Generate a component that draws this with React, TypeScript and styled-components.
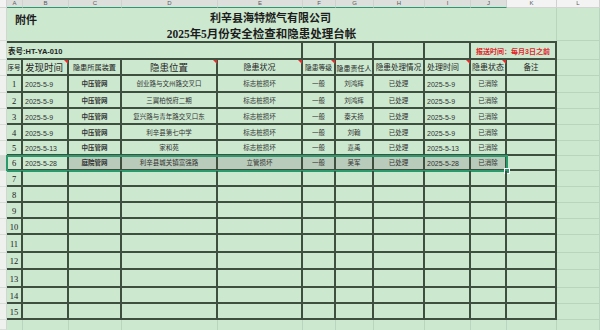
import React from 'react';
import styled, { createGlobalStyle, css } from 'styled-components';

const COLS = '7px 16px 46px 53px 96px 85px 33px 38px 51px 46px 36px 50px 1fr';
const LETTERS = ['A', 'B', 'C', 'D', 'E', 'F', 'G', 'H', 'I', 'J', 'K', 'L'];
const SELECTED_COLS = 10;
const LINE = '#3e4f40';
const GRID = '#bad5bd';
const SHEET = '#cce8cf';
const SEL = '#2a9a6c';
const SANS = `"Liberation Sans", "Noto Sans CJK SC", sans-serif`;
const SERIF = `"Liberation Serif", "Noto Sans CJK SC", serif`;

type Align = 'left' | 'center';

const columns: { label: string; size: number; align: Align; note: boolean }[] = [
  { label: '序号', size: 6.5, align: 'center', note: false },
  { label: '发现时间', size: 9.5, align: 'left', note: true },
  { label: '隐患所属装置', size: 7.2, align: 'center', note: false },
  { label: '隐患位置', size: 9.5, align: 'center', note: true },
  { label: '隐患状况', size: 8, align: 'center', note: true },
  { label: '隐患等级', size: 6.8, align: 'center', note: true },
  { label: '隐患责任人', size: 7, align: 'center', note: false },
  { label: '隐患处理情况', size: 7.6, align: 'center', note: false },
  { label: '处理时间', size: 8, align: 'left', note: true },
  { label: '隐患状态', size: 8, align: 'center', note: true },
  { label: '备注', size: 7.5, align: 'center', note: false },
];

const records = [
  ['2025-5-9', '中压管网', '创业路与文州路交叉口', '标志桩损坏', '一般', '刘鸿辉', '已处理', '2025-5-9', '已消除'],
  ['2025-5-9', '中压管网', '三翼柏悦府二期', '标志桩损坏', '一般', '刘鸿辉', '已处理', '2025-5-9', '已消除'],
  ['2025-5-9', '中压管网', '复兴路与青年路交叉口东', '标志桩损坏', '一般', '秦天扬', '已处理', '2025-5-9', '已消除'],
  ['2025-5-9', '中压管网', '利辛县第七中学', '标志桩损坏', '一般', '刘翰', '已处理', '2025-5-9', '已消除'],
  ['2025-5-13', '中压管网', '家和苑', '标志桩损坏', '一般', '嘉禹', '已处理', '2025-5-13', '已消除'],
  ['2025-5-28', '庭院管网', '利辛县城关镇富强路', '立管损坏', '一般', '吴军', '已处理', '2025-5-28', '已消除'],
];

const ROW_HEIGHTS = [17, 16, 16, 16, 15, 15, 16, 16, 16, 16, 18, 17, 18, 16, 16];
const SELECTED_ROW = 5;

const GlobalStyle = createGlobalStyle`
  html, body { margin: 0; padding: 0; background: ${SHEET}; }
`;

const Page = styled.div`
  width: 600px;
  height: 330px;
  overflow: hidden;
  background: ${SHEET};
  display: flex;
  flex-direction: column;
  font-family: ${SANS};
  color: #2b2b2b;
`;

const Row = styled.div<{ $h?: number }>`
  display: grid;
  grid-template-columns: ${COLS};
  position: relative;
  flex: ${(p) => (p.$h ? `0 0 ${p.$h}px` : '1 1 auto')};
  & > * {
    box-sizing: border-box;
    min-width: 0;
  }
`;

const Corner = styled.div`
  background: #f3f3f3;
  border-right: 1px solid #d4d4d4;
  border-bottom: 1px solid #d4d4d4;
`;

const ColLetter = styled.div<{ $sel: boolean }>`
  display: flex;
  align-items: center;
  justify-content: center;
  font: 6px/7px "Liberation Sans", sans-serif;
  color: #5a5a5a;
  overflow: hidden;
  background: ${(p) => (p.$sel ? '#dcdfdc' : '#f3f3f3')};
  border-right: 1px solid #cfd2cf;
  border-bottom: 1px solid ${(p) => (p.$sel ? SEL : '#d4d4d4')};
`;

const RowHead = styled.div<{ $sel?: boolean }>`
  background: ${(p) => (p.$sel ? '#d3dbd3' : '#eef1ee')};
  border-bottom: 1px solid #d8ddd8;
  border-right: 1px solid ${(p) => (p.$sel ? SEL : '#d0d6d0')};
`;

const Spare = styled.div<{ $noBottom?: boolean }>`
  border-right: 1px solid ${GRID};
  border-bottom: ${(p) => (p.$noBottom ? 'none' : `1px solid ${GRID}`)};
`;

const TitleCell = styled.div`
  grid-column: span 11;
  display: grid;
  grid-template-rows: 14px 14px;
  row-gap: 2px;
  padding: 3px 48px 0 8px;
  border-right: 1px solid ${GRID};
`;

const Attach = styled.span`
  grid-area: 1 / 1;
  justify-self: start;
  margin-top: 2px;
  font: bold 11px/14px ${SANS};
  color: #1c1c1c;
`;

const Company = styled.span`
  grid-area: 1 / 1;
  justify-self: center;
  margin-left: 18px;
  font: bold 11px/14px ${SERIF};
  color: #1c1c1c;
`;

const SheetTitle = styled.span`
  grid-area: 2 / 1;
  justify-self: center;
  font: bold 11.5px/14px ${SERIF};
  color: #1c1c1c;
`;

const boxed = css`
  border-top: 2px solid ${LINE};
  border-right: 2px solid ${LINE};
  border-bottom: 2px solid ${LINE};
  display: flex;
  align-items: center;
  padding-top: 2px;
`;

const CodeCell = styled.div`
  ${boxed};
  grid-column: span 5;
  padding-left: 1px;
  font: bold 7.5px/1 ${SANS};
  color: #1e1e1e;
`;

const BlankBox = styled.div`
  ${boxed};
`;

const Notice = styled.div`
  ${boxed};
  grid-column: span 2;
  justify-content: center;
  font: bold 7px/1 ${SANS};
  color: #e3262a;
  white-space: nowrap;
`;

const cell = css<{ $align: Align }>`
  display: flex;
  align-items: center;
  justify-content: ${(p) => (p.$align === 'left' ? 'flex-start' : 'center')};
  padding: 2px 0 0 ${(p) => (p.$align === 'left' ? '2px' : '0')};
  border-right: 2px solid ${LINE};
  border-bottom: 2px solid ${LINE};
  white-space: nowrap;
  overflow: hidden;
`;

const HeadCell = styled.div<{ $align: Align; $size: number; $note: boolean }>`
  ${cell};
  position: relative;
  overflow: visible;
  font-size: ${(p) => p.$size}px;
  line-height: 1;
  color: #1f1f1f;
  ${(p) =>
    p.$note &&
    css`
      &::after {
        content: '';
        position: absolute;
        top: 0;
        right: -1px;
        border-top: 4px solid #e03030;
        border-left: 4px solid transparent;
      }
    `}
`;

const DataCell = styled.div<{ $align: Align; $kind: 'num' | 'date' | 'text'; $bold?: boolean; $shade?: boolean }>`
  ${cell};
  background: ${(p) => (p.$shade ? '#b9cbba' : 'transparent')};
  color: #333;
  line-height: 1;
  font-weight: ${(p) => (p.$bold ? 700 : 400)};
  ${(p) =>
    p.$kind === 'num'
      ? css`
          font-family: ${SERIF};
          font-size: 8.5px;
          color: #222;
        `
      : p.$kind === 'date'
        ? css`
            font-family: ${SANS};
            font-size: 7px;
          `
        : css`
            font-family: ${SANS};
            font-size: 6.5px;
          `}
`;

const EmptyCell = styled.div`
  border-right: 1px solid ${GRID};
`;

const Selection = styled.div`
  position: absolute;
  left: 6px;
  width: 502px;
  top: -1px;
  bottom: -1px;
  box-sizing: border-box;
  border: 2px solid ${SEL};
  pointer-events: none;
  &::after {
    content: '';
    position: absolute;
    right: -4px;
    bottom: -4px;
    width: 4px;
    height: 4px;
    background: ${SEL};
    border: 1px solid #ffffff;
  }
`;

const App: React.FC = () => {
  return (
    <Page>
      <GlobalStyle />
      <Row $h={7}>
        <Corner />
        {LETTERS.map((l, i) => (
          <ColLetter key={l} $sel={i < SELECTED_COLS}>
            {l}
          </ColLetter>
        ))}
      </Row>

      <Row $h={32}>
        <RowHead />
        <TitleCell>
          <Attach>附件</Attach>
          <Company>利辛县海特燃气有限公司</Company>
          <SheetTitle>2025年5月份安全检查和隐患处理台帐</SheetTitle>
        </TitleCell>
        <Spare />
      </Row>

      <Row $h={19}>
        <RowHead />
        <CodeCell>表号:HT-YA-010</CodeCell>
        <BlankBox />
        <BlankBox />
        <BlankBox />
        <BlankBox />
        <Notice>报送时间：每月3日之前</Notice>
        <Spare />
      </Row>

      <Row $h={16}>
        <RowHead />
        {columns.map((c) => (
          <HeadCell key={c.label} $align={c.align} $size={c.size} $note={c.note}>
            {c.label}
          </HeadCell>
        ))}
        <Spare />
      </Row>

      {ROW_HEIGHTS.map((h, r) => {
        const rec = records[r];
        const sel = r === SELECTED_ROW;
        return (
          <Row key={r} $h={h}>
            <RowHead $sel={sel} />
            <DataCell $align="center" $kind="num">
              {r + 1}
            </DataCell>
            {columns.slice(1).map((c, ci) => {
              const value = rec ? rec[ci] ?? '' : '';
              const isDate = ci === 0 || ci === 7;
              return (
                <DataCell
                  key={c.label}
                  $align={isDate ? 'left' : 'center'}
                  $kind={isDate ? 'date' : 'text'}
                  $bold={ci === 1}
                  $shade={sel && ci >= 1 && ci <= 8}
                >
                  {value}
                </DataCell>
              );
            })}
            <Spare />
            {sel && <Selection />}
          </Row>
        );
      })}

      <Row>
        <RowHead />
        {columns.map((c) => (
          <EmptyCell key={c.label} />
        ))}
        <Spare $noBottom />
      </Row>
    </Page>
  );
};

export default App;
